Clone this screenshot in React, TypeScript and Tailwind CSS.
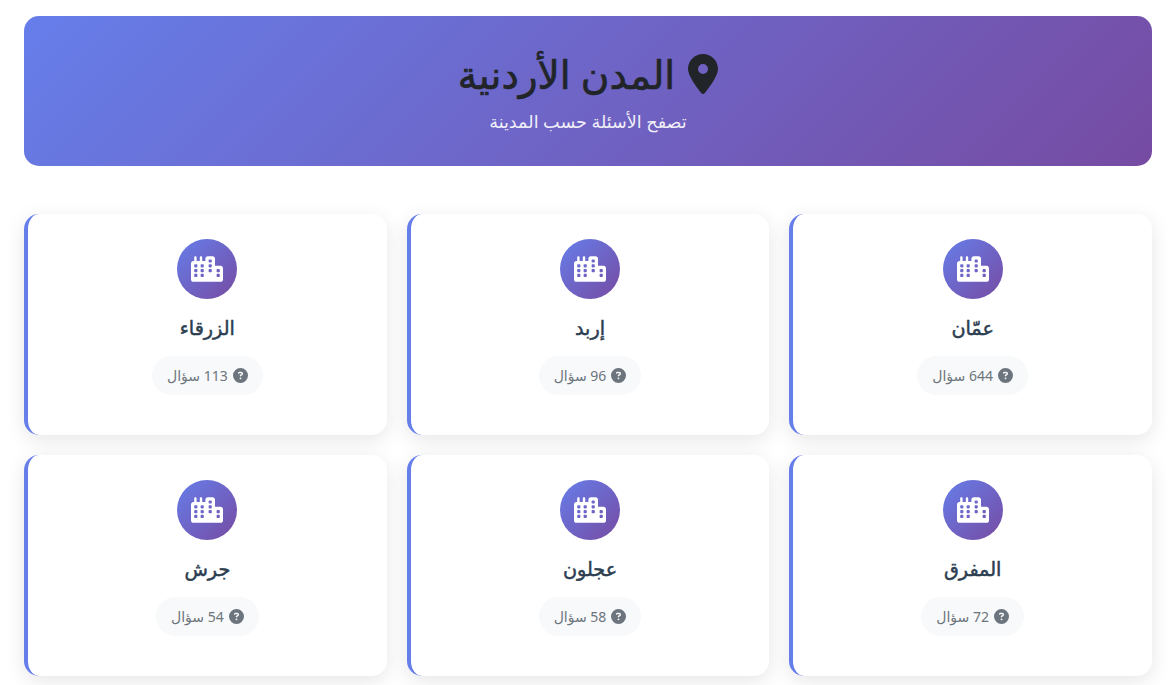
import React from 'react';
import { FaCity, FaLocationDot, FaCircleQuestion } from 'react-icons/fa6';

const cities = [
  { name: 'عمّان', count: 644 },
  { name: 'إربد', count: 96 },
  { name: 'الزرقاء', count: 113 },
  { name: 'المفرق', count: 72 },
  { name: 'عجلون', count: 58 },
  { name: 'جرش', count: 54 },
];

const CityCard = ({ name, count }: { name: string; count: number }) => (
  <div className="h-[221px] rounded-[15px] border-l-4 border-[#667eea] bg-white pt-[25px] text-center shadow-[0_5px_20px_rgba(0,0,0,0.1)]">
    <div className="mx-auto flex h-[60px] w-[60px] items-center justify-center rounded-full bg-[linear-gradient(135deg,#667eea_0%,#764ba2_100%)] text-white">
      <FaCity className="h-[26px] w-[32px]" />
    </div>
    <h3 className="mt-[14px] text-[19.2px] leading-[29px] font-normal text-[#2c3e50] [-webkit-text-stroke:0.5px_#2c3e50]">{name}</h3>
    <div className="mt-[14px] inline-flex h-[39px] items-center gap-[5px] rounded-[20px] bg-[#f8f9fa] px-[15px] text-[14px] text-[#6c757d]">
      <FaCircleQuestion className="h-[15px] w-[15px]" />
      <span>{count} سؤال</span>
    </div>
  </div>
);

export default function App() {
  return (
    <div dir="rtl" className="min-h-[685px] overflow-hidden bg-white px-[24px] pt-[16px] font-['Noto_Sans','DejaVu_Sans',sans-serif]">
      <header className="h-[150px] rounded-[15px] bg-[linear-gradient(135deg,#667eea_0%,#764ba2_100%)] pt-[30px] text-center">
        <h1 className="flex items-center justify-center gap-[13px] text-[39px] leading-[56px] font-normal text-[#212529] [-webkit-text-stroke:0.7px_#212529]">
          <FaLocationDot className="h-[40px] w-[30px]" />
          <span>المدن الأردنية</span>
        </h1>
        <p className="mt-[6px] text-[17.6px] leading-[26px] text-white opacity-90">تصفح الأسئلة حسب المدينة</p>
      </header>
      <div className="mt-[48px] grid grid-cols-3 gap-[20px]">
        {cities.map((c) => (
          <CityCard key={c.name} {...c} />
        ))}
      </div>
    </div>
  );
}
